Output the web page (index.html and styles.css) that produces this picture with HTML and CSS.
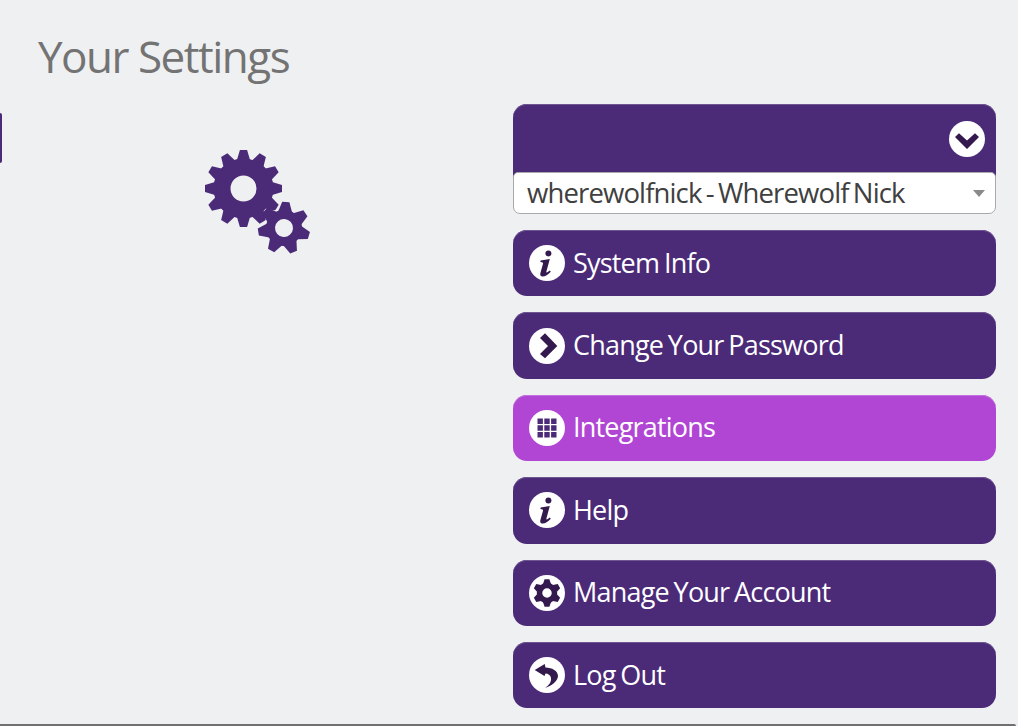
FILE: index.html
```html
<!DOCTYPE html>
<html lang="en">
<head>
<meta charset="utf-8">
<title>Your Settings</title>
<link rel="stylesheet" href="styles.css">
</head>
<body>
<svg class="defs" width="0" height="0" aria-hidden="true">
  <defs>
    <g id="ic-info">
      <circle cx="18" cy="18" r="18" fill="#fff"/>
      <circle cx="19.4" cy="8.4" r="3" fill="#34194f"/>
      <path d="M11.6 15.6 L20.8 14 L17.4 26.6 C17.1 27.9 18 28 20.8 25.6 L21.8 26.8 C19 30 16.2 31.6 13.8 31.6 C11.6 31.6 10.8 30.2 11.4 28 L14 18.8 C14.3 17.6 13.4 17.2 11.4 17 Z" fill="#34194f"/>
    </g>
  </defs>
</svg>
<div class="tab-edge"></div>
<main class="page">
  <h1 class="title">Your Settings</h1>
  <div class="columns">
    <section class="art">
      <svg class="gears" width="110" height="110" viewBox="0 0 110 110" aria-hidden="true">
        <g transform="translate(38.5 38.5)" fill="#4b2a78">
          <circle r="21.5" fill="none" stroke="#4b2a78" stroke-width="17"/>
          <path id="bt" d="M-7 -27 L-3.6 -38.5 L3.6 -38.5 L7 -27 Z"/>
          <use href="#bt" transform="rotate(30)"/>
          <use href="#bt" transform="rotate(60)"/>
          <use href="#bt" transform="rotate(90)"/>
          <use href="#bt" transform="rotate(120)"/>
          <use href="#bt" transform="rotate(150)"/>
          <use href="#bt" transform="rotate(180)"/>
          <use href="#bt" transform="rotate(210)"/>
          <use href="#bt" transform="rotate(240)"/>
          <use href="#bt" transform="rotate(270)"/>
          <use href="#bt" transform="rotate(300)"/>
          <use href="#bt" transform="rotate(330)"/>
        </g>
        <g transform="translate(79 78) rotate(4)">
          <circle r="20" fill="#eff0f2"/>
          <circle r="13.5" fill="none" stroke="#4b2a78" stroke-width="9"/>
          <path id="st" fill="#4b2a78" d="M-7 -16 L-3.6 -26 L3.6 -26 L7 -16 Z"/>
          <use href="#st" transform="rotate(51.43)"/>
          <use href="#st" transform="rotate(102.86)"/>
          <use href="#st" transform="rotate(154.29)"/>
          <use href="#st" transform="rotate(205.71)"/>
          <use href="#st" transform="rotate(257.14)"/>
          <use href="#st" transform="rotate(308.57)"/>
        </g>
      </svg>
    </section>
    <nav class="menu">
      <div class="account">
        <div class="account-head">
          <svg class="icon" width="38" height="38" viewBox="0 0 38 38"><circle cx="19" cy="19" r="18" fill="#fff"/><path d="M7 17 L11 13.3 L19 20.5 L27 13.3 L31 17 L19 29 Z" fill="#34194f"/></svg>
        </div>
        <div class="account-select">
          <span>wherewolfnick - Wherewolf Nick</span>
          <i class="caret"></i>
        </div>
      </div>
      <a class="item">
        <svg class="icon" width="38" height="38" viewBox="-1 -1 38 38"><use href="#ic-info"/></svg>
        <span>System Info</span>
      </a>
      <a class="item">
        <svg class="icon" width="38" height="38" viewBox="0 0 38 38"><circle cx="19" cy="19" r="18" fill="#fff"/><path d="M12 11 L17 6.3 L29.3 19 L17 31.3 L12 27 L20 19 Z" fill="#34194f"/></svg>
        <span>Change Your Password</span>
      </a>
      <a class="item active">
        <svg class="icon" width="38" height="38" viewBox="0 0 38 38">
          <circle cx="19" cy="19" r="18" fill="#fff"/>
          <path fill="#4b2a78" d="M9.5 9.5h5.4v5.4H9.5zM16.3 9.5h5.4v5.4h-5.4zM23.1 9.5h5.4v5.4h-5.4zM9.5 16.3h5.4v5.4H9.5zM16.3 16.3h5.4v5.4h-5.4zM23.1 16.3h5.4v5.4h-5.4zM9.5 23.1h5.4v5.4H9.5zM16.3 23.1h5.4v5.4h-5.4zM23.1 23.1h5.4v5.4h-5.4z"/>
        </svg>
        <span>Integrations</span>
      </a>
      <a class="item">
        <svg class="icon" width="38" height="38" viewBox="-1 -1 38 38"><use href="#ic-info"/></svg>
        <span>Help</span>
      </a>
      <a class="item">
        <svg class="icon" width="38" height="38" viewBox="0 0 38 38">
          <circle cx="19" cy="19" r="18" fill="#fff"/>
          <g transform="translate(19 19)" fill="#34194f">
            <circle r="7.5" fill="none" stroke="#34194f" stroke-width="5.5"/>
            <path id="mt" d="M-4 -9 L-2.4 -13.8 L2.4 -13.8 L4 -9 Z"/>
            <use href="#mt" transform="rotate(60)"/>
            <use href="#mt" transform="rotate(120)"/>
            <use href="#mt" transform="rotate(180)"/>
            <use href="#mt" transform="rotate(240)"/>
            <use href="#mt" transform="rotate(300)"/>
          </g>
        </svg>
        <span>Manage Your Account</span>
      </a>
      <a class="item">
        <svg class="icon" width="38" height="38" viewBox="0 0 38 38">
          <circle cx="19" cy="19" r="18" fill="#fff"/>
          <path fill="#34194f" d="M6.7 14 L16.7 8 L17.5 11.5 C24 11.5 30 15 30 20 C30 25 23 30 17.3 32 C21 29 23.5 26 23 22 C22.5 19 20 17.5 17.5 17.5 L16.5 20 Z"/>
        </svg>
        <span>Log Out</span>
      </a>
    </nav>
  </div>
</main>
<footer class="bottom-bar"></footer>
</body>
</html>
```

FILE: styles.css
```css
* { box-sizing: border-box; }

html, body {
  margin: 0;
  height: 726px;
  overflow: hidden;
  background: #eff0f2;
  font-family: "Open Sans", "Liberation Sans", sans-serif;
}

.defs { position: absolute; }

.tab-edge {
  position: absolute;
  left: 0;
  top: 113px;
  width: 2px;
  height: 50px;
  background: #4b2a78;
  border-radius: 0 2px 2px 0;
}

.page {
  height: 724px;
  padding: 30px 22px 0 38px;
}

.title {
  margin: 0;
  height: 74px;
  font-size: 44px;
  line-height: 52px;
  font-weight: 400;
  letter-spacing: -1.5px;
  color: #737373;
}

.columns {
  display: flex;
  justify-content: space-between;
}

.art { padding: 46px 0 0 167px; }
.gears { display: block; }

.menu {
  width: 483px;
  display: flex;
  flex-direction: column;
  gap: 16px;
}

.account {
  height: 110px;
  background: #4b2a78;
  border-radius: 14px;
  box-shadow: inset 0 1px 0 #6f5592;
  display: flex;
  flex-direction: column;
}

.account-head {
  height: 68px;
  display: flex;
  justify-content: flex-end;
  align-items: flex-start;
  padding: 16px 10.5px 0 0;
}

.account-select {
  height: 42px;
  display: flex;
  align-items: center;
  justify-content: space-between;
  padding: 0 10px 2px 13px;
  background: #fff;
  border: 1px solid #a9a9ab;
  border-radius: 5px 5px 7px 7px;
  font-size: 27.5px;
  letter-spacing: -0.87px;
  word-spacing: -2px;
  color: #404040;
}

.caret {
  width: 0;
  height: 0;
  margin-top: 2px;
  border-left: 6px solid transparent;
  border-right: 6px solid transparent;
  border-top: 7px solid #8a8a8a;
}

.item {
  height: 66.4px;
  display: flex;
  align-items: center;
  gap: 7.5px;
  padding-left: 14.5px;
  background: #4b2a78;
  border-radius: 14px;
  box-shadow: inset 0 1px 0 #6f5592;
  color: #fff;
  font-size: 27px;
  letter-spacing: -0.8px;
  word-spacing: -1.5px;
}

.item span { padding-bottom: 2px; }
.item.active { background: #b146d4; box-shadow: inset 0 1px 0 #c272dd; }
.item .icon { flex: none; display: block; }

.bottom-bar {
  height: 2px;
  width: 1016px;
  background: #707070;
  border-radius: 0 3px 0 0;
}
```
